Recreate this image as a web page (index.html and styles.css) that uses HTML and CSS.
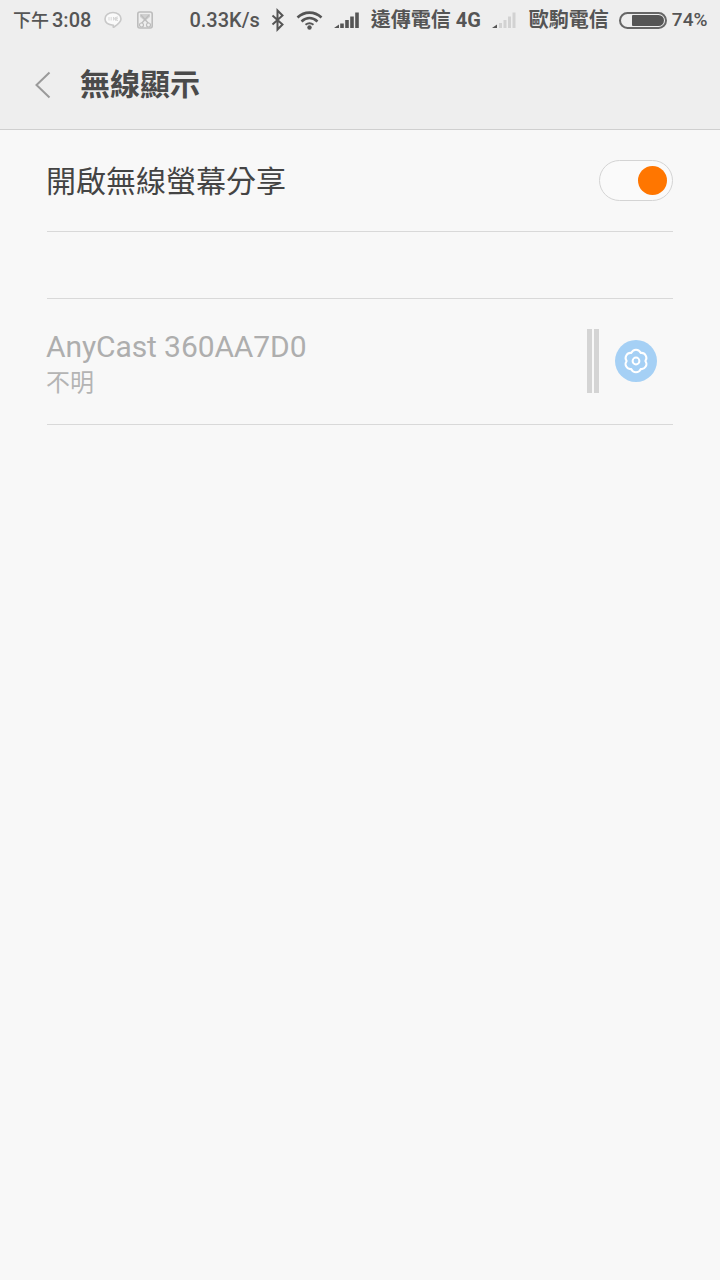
FILE: index.html
```html
<!DOCTYPE html>
<html lang="zh-TW">
<head>
<meta charset="utf-8">
<title>無線顯示</title>
<link rel="stylesheet" href="styles.css">
</head>
<body>
<div class="screen">
  <header class="top">
    <div class="status">
      <span class="s-text time"><span class="time-cjk">下午</span>3:08</span>
      <svg class="i-line" width="20" height="20" viewBox="0 0 20 20"><path d="M10 2.500c4.600 0 8 2.700 8 6.400 0 3.200-3.500 5.700-7 8.100-.6.400-.9.200-.8-.5l.1-1.200C5.500 14.600 2 12.200 2 8.900 2 5.200 5.400 2.500 10 2.500z" fill="#fafafa" stroke="#c8c8c8" stroke-width="1.600"/><path d="M6 7v3.500M8.200 7v3.500M10.500 10.500V7l2 3.500V7M15 7h-1.400v3.500H15M13.600 8.700H15" fill="none" stroke="#cfcfcf" stroke-width=".8"/></svg>
      <svg class="i-clip" width="18" height="20" viewBox="0 0 18 20"><rect x="1.800" y="2" width="14.400" height="16" rx="2" fill="none" stroke="#bdbdbd" stroke-width="1.600"/><path d="M4 4h10v3l-5 4-5-4z" fill="#d0d0d0"/><path d="M5 5l8 9M13 5l-8 9" stroke="#bdbdbd" stroke-width="1.300"/><circle cx="5.500" cy="15" r="2" fill="#f0f0f0" stroke="#bdbdbd" stroke-width="1.200"/><circle cx="12.500" cy="15" r="2" fill="#f0f0f0" stroke="#bdbdbd" stroke-width="1.200"/></svg>
      <span class="s-text speed">0.33K/s</span>
      <svg class="i-bt" width="16" height="24" viewBox="0 0 16 24"><path d="M2.500 7.500l10 9-5 5V2.500l5 5-10 9" fill="none" stroke="#555" stroke-width="2"/></svg>
      <svg class="i-wifi" width="27" height="20" viewBox="0 0 27 20"><path d="M1.500 7.500C8.500 1 18.500 1 25.500 7.500M5.500 11.500c5-4.500 11-4.500 16 0" fill="none" stroke="#555" stroke-width="2.600"/><path d="M9.500 14.800c2.500-2 5.500-2 8 0" fill="none" stroke="#555" stroke-width="2"/><circle cx="13.500" cy="17.500" r="2.200" fill="#555"/></svg>
      <svg class="i-sig1" width="26" height="18" viewBox="0 0 26 18"><path d="M1 17l5-3.500V17zM7.200 12.500h3.600V17H7.200zM12.200 9h3.600v8h-3.600zM17.200 5.500h3.600V17h-3.600zM22.200 1.500h3.600V17h-3.600z" fill="#555"/></svg>
      <span class="s-text carrier1">遠傳電信 4G</span>
      <svg class="i-sig2" width="26" height="18" viewBox="0 0 26 18"><path d="M1 17l5-3.500V17z" fill="#555"/><path d="M8 12h3v5H8zM12.500 9h3v8h-3zM17 5.500h3V17h-3zM21.500 1.500h3V17h-3z" fill="#d2d2d2"/></svg>
      <span class="s-text carrier2">歐駒電信</span>
      <div class="battery"><div class="battery-fill"></div></div>
      <span class="s-text pct">74%</span>
    </div>
    <div class="titlebar">
      <svg class="back" width="18" height="28" viewBox="0 0 18 28"><path d="M15.500 1.500L2.500 14l13 12.500" fill="none" stroke="#9a9a9a" stroke-width="2"/></svg>
      <h1 class="title">無線顯示</h1>
    </div>
  </header>
  <main class="content">
    <div class="row row-switch">
      <span class="label">開啟無線螢幕分享</span>
      <div class="switch"><div class="knob"></div></div>
    </div>
    <div class="spacer"></div>
    <div class="row row-device">
      <div class="device-text">
        <div class="device-name">AnyCast 360AA7D0</div>
        <div class="device-sub">不明</div>
      </div>
      <div class="device-actions">
        <div class="bars"><i class="bar"></i><i class="bar"></i></div>
        <div class="gear">
          <svg width="28" height="28" viewBox="0 0 28 28"><path d="M23.300 14a5 5 0 0 1-4.650 8.050a5 5 0 0 1-9.300 0a5 5 0 0 1-4.650-8.050a5 5 0 0 1 4.650-8.050a5 5 0 0 1 9.300 0a5 5 0 0 1 4.650 8.050z" fill="none" stroke="#fff" stroke-width="2" stroke-linejoin="round"/><circle cx="14" cy="14" r="3.400" fill="none" stroke="#fff" stroke-width="2"/></svg>
        </div>
      </div>
    </div>
  </main>
</div>
</body>
</html>
```
FILE: styles.css
```css
* { box-sizing: border-box; }
html, body { margin: 0; padding: 0; }
body {
  width: 720px;
  height: 1280px;
  overflow: hidden;
  background: #f8f8f8;
  font-family: Roboto, "Noto Sans CJK TC", sans-serif;
}
.screen { width: 720px; height: 1280px; display: flex; flex-direction: column; }
.top {
  height: 130px;
  background: #eeeeee;
  border-bottom: 1px solid #cfcfcf;
}
.status {
  height: 40px;
  display: flex;
  align-items: center;
  padding-left: 13px;
}
.s-text {
  font-size: 20px;
  font-weight: 500;
  color: #555;
  white-space: nowrap;
  line-height: 40px;
}
.time-cjk { font-size: 18px; margin-right: 3px; }
.i-line { margin-left: 12px; }
.i-clip { margin-left: 13px; }
.speed { margin-left: 35px; }
.i-bt { margin-left: 10px; }
.i-wifi { margin-left: 10px; }
.i-sig1 { margin-left: 10px; }
.carrier1 { margin-left: 12px; font-weight: 700; }
.i-sig2 { margin-left: 10px; }
.carrier2 { margin-left: 12px; font-weight: 700; }
.battery {
  width: 48px;
  height: 17px;
  margin-left: 10px;
  border: 2px solid #666;
  border-radius: 9px;
  padding: 1px 1px 1px 11px;
}
.battery-fill { width: 100%; height: 100%; background: #555; border-radius: 1px 6px 6px 1px; }
.pct { margin-left: 5px; font-size: 19px; }
.titlebar {
  height: 89px;
  display: flex;
  align-items: center;
  padding-left: 33px;
}
.back { margin-left: 1px; }
.title {
  margin: 0 0 0 28px;
  font-size: 30px;
  font-weight: 700;
  color: #4a4a4a;
  line-height: 40px;
}
.content { flex: 1; padding: 0 47px; }
.row { display: flex; align-items: center; justify-content: space-between; border-bottom: 1px solid #d9d9d9; }
.row-switch { height: 102px; }
.label { font-size: 30px; color: #444; line-height: 40px; margin: 3px 0 0 -1px; }
.switch {
  width: 74px;
  height: 41px;
  border: 1px solid #d4d4d4;
  border-radius: 21px;
  background: #fafafa;
  display: flex;
  align-items: center;
  justify-content: flex-end;
  padding-right: 5px;
  margin-top: -1px;
}
.knob { width: 29px; height: 29px; border-radius: 50%; background: #ff7600; }
.spacer { height: 67px; border-bottom: 1px solid #d9d9d9; }
.row-device { height: 126px; padding-right: 16px; }
.device-text { margin: 3px 0 0 -1px; }
.device-name { font-size: 30px; color: #aeaeae; line-height: 36px; letter-spacing: -0.1px; }
.device-sub { font-size: 24px; color: #b4b4b4; line-height: 30px; margin-top: 3px; }
.device-actions { display: flex; align-items: center; }
.bars { display: flex; gap: 2px; height: 64px; margin-bottom: 1px; }
.bar { display: block; width: 5px; height: 64px; background: #d4d4d4; }
.gear {
  width: 42px;
  height: 42px;
  margin-left: 16px;
  margin-bottom: 1px;
  border-radius: 50%;
  background: #a5d0f5;
  display: flex;
  align-items: center;
  justify-content: center;
}
```
